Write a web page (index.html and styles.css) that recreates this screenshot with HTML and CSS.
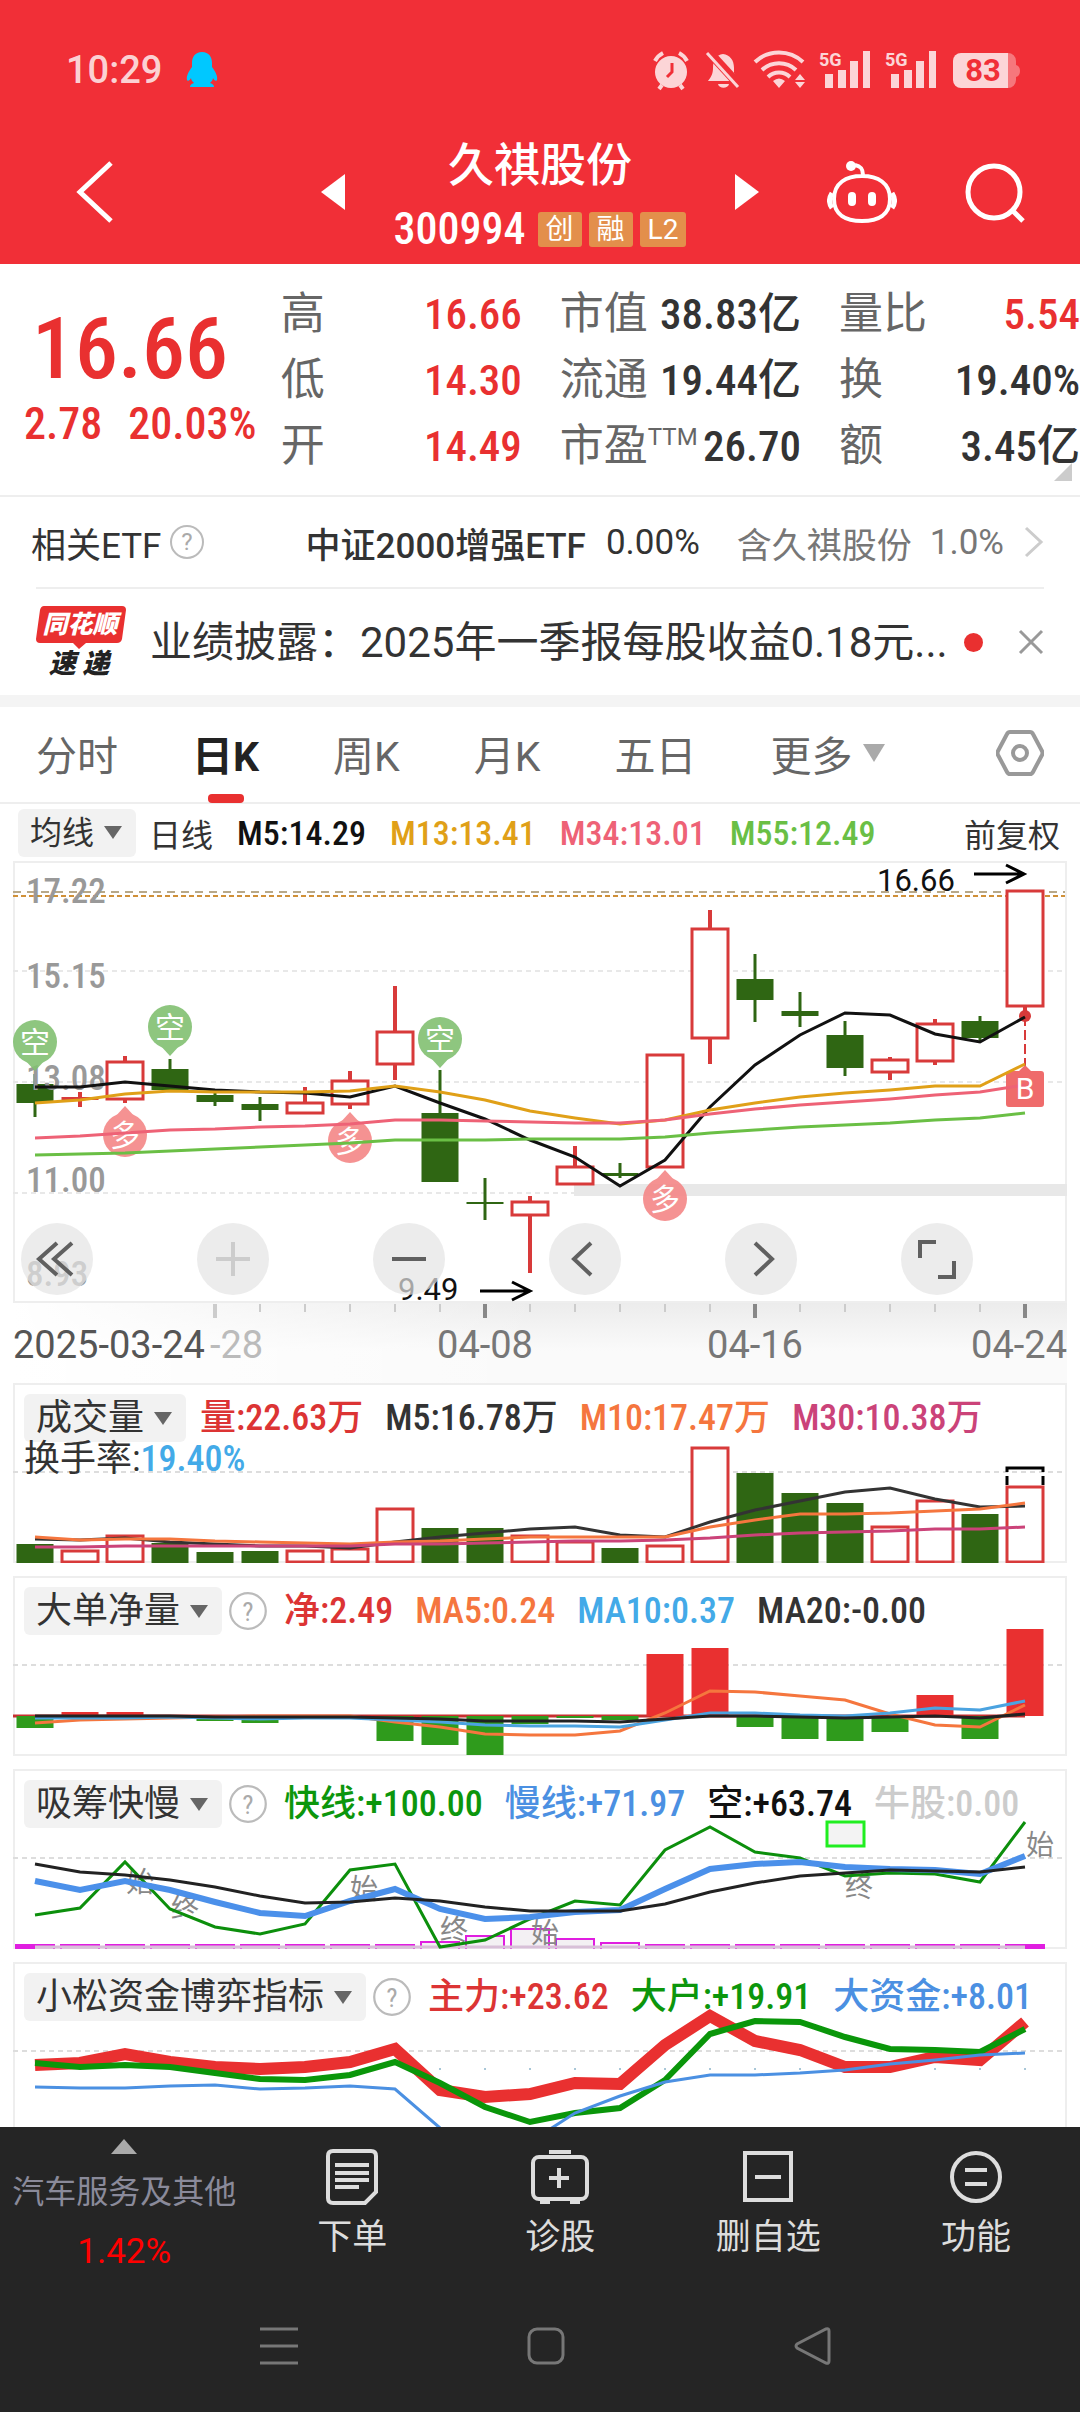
FILE: index.html
```
<!doctype html>
<html lang="zh-CN">
<head>
    <meta charset="utf-8"/>
    <meta name="viewport" content="width=device-width"/>
    <title>久祺股份 300994</title>
    <link rel="stylesheet" href="styles.css">
</head>
<body>
    <header class="top">
        <div class="status">
            <span class="clock">10:29</span>
            <svg class="qq" width="32" height="36" viewBox="0 0 32 36"><path d="M16 0C9 0 6 5 6 11v4C3 19 0 24 1 28c1 2 3 0 4-2 0 2 2 4 3 5-3 1-4 2-4 4h24c0-2-1-3-4-4 1-1 3-3 3-5 1 2 3 4 4 2 1-4-2-9-5-13v-4C26 5 23 0 16 0z" fill="#00c8ff"/></svg>
            <svg width="374" height="48" viewBox="0 -4 374 48" fill="#fff">
                <g opacity=".8">
                    <circle cx="19" cy="22" r="16"/>
                    <path d="M3 11a18 18 0 0 1 8-8M27 3a18 18 0 0 1 8 8M10 35l-3 4M28 35l3 4" fill="none" stroke="#fff" stroke-width="4"/>
                    <path d="M20 13v9l-5 5" fill="none" stroke="#f12f37" stroke-width="3"/>
                    <path d="M71 4c7 1 11 6 11 14v5l5 8H56c3-4 5-7 5-13 0-8 3-13 10-14zM66 34h11c-1 5-10 5-11 0z"/>
                    <path d="M56 1l32 35" stroke="#f12f37" stroke-width="9"/>
                    <path d="M55 3l31 34" stroke="#fff" stroke-width="3"/>
                    <path d="M103 12a35 35 0 0 1 48 0M110 20a25 25 0 0 1 34 0M116 27a16 16 0 0 1 22 0" fill="none" stroke="#fff" stroke-width="4"/>
                    <path d="M127 38l-6-7q6-5 12 0zM148 24l5 6h-10zM148 38l5-6h-10z"/>
                    <path d="M173 24h8v14h-8zM186 20h8v18h-8zM198 11h8v27h-8zM211 1h7v37h-7z"/>
                    <path d="M239 24h8v14h-8zM252 20h8v18h-8zM264 11h8v27h-8zM277 1h7v37h-7z"/>
                    <text class="net" x="167" y="16">5G</text>
                    <text class="net" x="233" y="16">5G</text>
                    <path d="M309 3h47v35h-47a8 8 0 0 1-8-8V11a8 8 0 0 1 8-8z"/>
                </g>
                <path d="M356 3a8 8 0 0 1 8 8v4q4 1 4 6t-4 6v3a8 8 0 0 1-8 8z" opacity=".35"/>
                <text class="pct" x="331" y="31">83</text>
            </svg>
        </div>
        <nav class="nav">
            <div class="nav-side">
                <button class="icon-btn" aria-label="返回"><svg width="38" height="64" viewBox="0 0 38 64"><path d="M35 3L4 32l31 29" fill="none" stroke="#fff" stroke-width="5"/></svg></button>
                <button class="icon-btn" aria-label="上一只"><svg width="24" height="36" viewBox="0 0 24 36"><path d="M24 0v36L0 18z" fill="#fff"/></svg></button>
            </div>
            <div class="nav-title">
                <h1>久祺股份</h1>
                <p><span class="code">300994</span><i class="tag">创</i><i class="tag">融</i><i class="tag">L2</i></p>
            </div>
            <div class="nav-side nav-right">
                <button class="icon-btn" aria-label="下一只"><svg width="24" height="36" viewBox="0 0 24 36"><path d="M0 0v36l24-18z" fill="#fff"/></svg></button>
                <button class="icon-btn" aria-label="助手">
                    <svg width="70" height="64" viewBox="0 0 70 64" fill="none" stroke="#fff" stroke-width="4">
                        <path d="M35 16c16 0 28 7 28 23s-12 22-28 22S7 55 7 39s12-23 28-23zM36 15c0-7-3-9-8-10"/>
                        <path d="M5 33q-5 8 0 15M65 33q5 8 0 15" stroke-width="5"/>
                        <path d="M25 36v6M45 36v6" stroke-width="8" stroke-linecap="round"/>
                        <circle cx="24" cy="6" r="5" fill="#fff" stroke="none"/>
                    </svg>
                </button>
                <button class="icon-btn" aria-label="搜索"><svg width="61" height="64" viewBox="0 0 61 64" fill="none" stroke="#fff" stroke-width="5"><circle cx="29" cy="32" r="26"/><path d="M47 50l11 11"/></svg></button>
            </div>
        </nav>
    </header>

    <section class="quote">
        <div class="price">
            <strong>16.66</strong>
            <p><span>2.78</span><span>20.03%</span></p>
        </div>
        <div class="stats">
            <dl>
                <div><dt>高</dt><dd class="up">16.66</dd></div>
                <div><dt>低</dt><dd class="up">14.30</dd></div>
                <div><dt>开</dt><dd class="up">14.49</dd></div>
            </dl>
            <dl>
                <div><dt>市值</dt><dd>38.83亿</dd></div>
                <div><dt>流通</dt><dd>19.44亿</dd></div>
                <div><dt>市盈<sup>TTM</sup></dt><dd>26.70</dd></div>
            </dl>
            <dl>
                <div><dt>量比</dt><dd class="up">5.54</dd></div>
                <div><dt>换</dt><dd>19.40%</dd></div>
                <div><dt>额</dt><dd>3.45亿</dd></div>
            </dl>
        </div>
    </section>

    <a class="etf" href="#etf">
        <span>相关ETF</span>
        <svg class="help" viewBox="0 0 36 36"><circle cx="18" cy="18" r="16"/><text x="18" y="26">?</text></svg>
        <b>中证2000增强ETF</b>
        <span>0.00%</span>
        <span class="muted hold">含久祺股份</span>
        <span class="muted">1.0%</span>
        <svg class="more" width="20" height="32" viewBox="0 0 20 32"><path d="M2 2l15 14L2 30" fill="none" stroke="#ccc" stroke-width="3"/></svg>
    </a>

    <div class="news">
        <svg width="90" height="74" viewBox="0 0 90 74">
            <path d="M8 1h78q4 0 4 4l-4 29q-1 4-5 4H50l-7 6-6-6H4q-4 0-4-4L4 5q1-4 4-4z" fill="#e93030"/>
            <text class="logo" x="44" y="28" fill="#fff">同花顺</text>
            <text class="logo logo-dark" x="43" y="68">速 递</text>
        </svg>
        <a href="#news">业绩披露：2025年一季报每股收益0.18元...</a>
        <i class="dot"></i>
        <button class="icon-btn" aria-label="关闭"><svg width="26" height="26" viewBox="0 0 26 26"><path d="M2 2l22 22M24 2L2 24" stroke="#999" stroke-width="3"/></svg></button>
    </div>

    <nav class="tabs">
        <button>分时</button>
        <button class="active">日K</button>
        <button>周K</button>
        <button>月K</button>
        <button>五日</button>
        <button class="caret">更多</button>
        <button class="settings" aria-label="设置"><svg width="48" height="46" viewBox="0 0 48 46" fill="none" stroke="#999"><path d="M14 2h20q2 0 3 2l9 17q1 2 0 4l-9 17q-1 2-3 2H14q-2 0-3-2L2 25q-1-2 0-4L11 4q1-2 3-2z" stroke-width="4"/><circle cx="24" cy="23" r="7" stroke-width="4"/></svg></button>
    </nav>

    <main class="charts">
        <div class="ma">
            <button class="pick">均线</button>
            <span class="day">日线</span>
            <b class="c-black">M5:14.29</b>
            <b class="c-gold">M13:13.41</b>
            <b class="c-pink">M34:13.01</b>
            <b class="c-lime">M55:12.49</b>
            <span class="adjust">前复权</span>
        </div>
        <div class="panel">
            <svg id="kline" viewBox="0 0 1054 442"></svg>
            <div class="controls">
                <button aria-label="最早"><svg viewBox="0 0 72 72"><path d="M36 20L18 36l18 16M51 20L33 36l18 16"/></svg></button>
                <button aria-label="放大" disabled><svg viewBox="0 0 72 72"><path d="M19 36h34M36 19v34"/></svg></button>
                <button aria-label="缩小"><svg viewBox="0 0 72 72"><path d="M19 36h34"/></svg></button>
                <button aria-label="左移"><svg viewBox="0 0 72 72"><path d="M42 20L25 36l17 16"/></svg></button>
                <button aria-label="右移"><svg viewBox="0 0 72 72"><path d="M30 20l17 16-17 16"/></svg></button>
                <button aria-label="全屏"><svg viewBox="0 0 72 72"><path d="M19 35V19h16M53 38v16H37"/></svg></button>
            </div>
        </div>
        <svg id="dates" class="dates" viewBox="0 0 1054 80"></svg>

        <div class="panel sub">
            <svg id="volume" viewBox="0 0 1054 180"></svg>
            <div class="legend">
                <button class="pick">成交量</button>
                <b class="c-red">量:22.63万</b>
                <b class="c-dark">M5:16.78万</b>
                <b class="c-orange">M10:17.47万</b>
                <b class="c-plum">M30:10.38万</b>
                <span class="turnover">换手率:<b class="c-sky">19.40%</b></span>
            </div>
        </div>
        <div class="panel sub">
            <svg id="netflow" viewBox="0 0 1054 180"></svg>
            <div class="legend">
                <button class="pick">大单净量</button>
                <svg class="help" viewBox="0 0 36 36"><circle cx="18" cy="18" r="16"/><text x="18" y="27">?</text></svg>
                <b class="c-red">净:2.49</b>
                <b class="c-orange">MA5:0.24</b>
                <b class="c-sky">MA10:0.37</b>
                <b class="c-dark">MA20:-0.00</b>
            </div>
        </div>
        <div class="panel sub">
            <svg id="speed" viewBox="0 0 1054 180"></svg>
            <div class="legend">
                <button class="pick">吸筹快慢</button>
                <svg class="help" viewBox="0 0 36 36"><circle cx="18" cy="18" r="16"/><text x="18" y="27">?</text></svg>
                <b class="c-green">快线:+100.00</b>
                <b class="c-blue">慢线:+71.97</b>
                <b class="c-black">空:+63.74</b>
                <b class="c-grey">牛股:0.00</b>
            </div>
        </div>
        <div class="panel sub cut">
            <svg id="funds" viewBox="0 0 1054 165"></svg>
            <div class="legend">
                <button class="pick">小松资金博弈指标</button>
                <svg class="help" viewBox="0 0 36 36"><circle cx="18" cy="18" r="16"/><text x="18" y="27">?</text></svg>
                <b class="c-red">主力:+23.62</b>
                <b class="c-green">大户:+19.91</b>
                <b class="c-blue">大资金:+8.01</b>
            </div>
        </div>
    </main>

    <footer class="bottom">
        <div class="tools">
            <a class="sector" href="#sector">
                <i class="arrow"></i>
                <span>汽车服务及其他</span>
                <em>1.42%</em>
            </a>
            <button><svg width="52" height="56" viewBox="0 0 52 56"><path d="M7 2h38q5 0 5 5v36L39 54H7q-5 0-5-5V7q0-5 5-5z"/><path d="M9 16h34M9 24h34M9 31h34M9 38h24"/></svg>下单</button>
            <button><svg width="60" height="56" viewBox="0 0 60 56"><rect x="3" y="8" width="54" height="42" rx="6"/><path d="M19 3h22M29 19v20M19 29h20M10 53h10M40 53h10"/></svg>诊股</button>
            <button><svg width="52" height="56" viewBox="0 0 52 56"><rect x="3" y="4" width="46" height="47"/><path d="M13 28h26"/></svg>删自选</button>
            <button><svg width="52" height="56" viewBox="0 0 52 56"><circle cx="26" cy="28" r="24"/><path d="M15 21h22M15 35h22"/></svg>功能</button>
        </div>
        <div class="system">
            <button class="icon-btn" aria-label="最近任务"><svg width="38" height="38" viewBox="0 0 38 38"><path d="M0 2h38M0 19h38M0 36h38"/></svg></button>
            <button class="icon-btn" aria-label="主屏幕"><svg width="38" height="38" viewBox="0 0 38 38"><rect x="2" y="2" width="34" height="34" rx="8"/></svg></button>
            <button class="icon-btn" aria-label="后退"><svg width="38" height="38" viewBox="0 0 38 38"><path d="M3 17L32 2q3-1 3 2v30q0 3-3 2L3 21q-2-2 0-4z"/></svg></button>
        </div>
    </footer>

    <script src="charts.js"></script>
</body>
</html>
```
FILE: styles.css
```
* {
    box-sizing: border-box;
}
body {
    margin: 0;
    background: #fff;
    color: #333;
    font-family: "Roboto", "Noto Sans CJK SC", sans-serif;
    font-size: 36px;
}
h1, p, dl, dd {
    margin: 0;
}
button {
    padding: 0;
    border: 0;
    background: none;
    color: inherit;
    font: inherit;
}
a {
    color: inherit;
    text-decoration: none;
}
i, em {
    font-style: normal;
}
svg {
    display: block;
    flex: none;
}

/* header */
.top {
    background: #f12f37;
    color: #fff;
}
.status {
    display: flex;
    align-items: center;
    height: 120px;
    padding: 20px 54px 0 66px;
}
.clock {
    margin-right: 24px;
    color: rgba(255, 255, 255, .8);
    font-size: 38px;
    font-weight: 500;
}
.qq {
    margin-right: auto;
}
.net {
    font-size: 18px;
    font-weight: 700;
}
.pct {
    fill: #f12f37;
    font-size: 31px;
    font-weight: 700;
    text-anchor: middle;
}
.nav {
    display: grid;
    grid-template-columns: 1fr 390px 1fr;
    align-items: center;
    height: 144px;
}
.nav-side {
    display: flex;
    align-items: center;
    justify-content: space-between;
    padding-left: 76px;
}
.nav-right {
    padding: 0 54px 0 0;
}
.nav-title {
    text-align: center;
}
.nav-title h1 {
    font-size: 46px;
    font-weight: 500;
    line-height: 56px;
}
.nav-title p {
    display: flex;
    align-items: center;
    justify-content: center;
    gap: 7px;
    margin-top: 18px;
    height: 36px;
}
.code {
    margin-right: 5px;
    font: 500 44px "Roboto Condensed", "Roboto", sans-serif;
}
.tag {
    min-width: 44px;
    padding: 0 8px;
    border-radius: 3px;
    background: #e38f4b;
    font-size: 28px;
    line-height: 35px;
}

/* quote */
.quote {
    position: relative;
    display: grid;
    grid-template-columns: 26% 1fr;
    padding: 17px 0 16px;
    border-bottom: 2px solid #eee;
}
.quote::after {
    content: "";
    position: absolute;
    right: 8px;
    bottom: 14px;
    border-left: 18px solid transparent;
    border-bottom: 18px solid #ccc;
}
.price {
    padding-top: 16px;
    color: #e93030;
    font-family: "Roboto Condensed", "Roboto", sans-serif;
    font-weight: 500;
}
.price strong {
    display: block;
    padding-left: 32px;
    font-size: 86px;
    font-weight: 500;
    line-height: 104px;
}
.price p {
    display: flex;
    gap: 26px;
    padding-left: 24px;
    font-size: 44px;
    line-height: 46px;
}
.stats {
    display: flex;
    gap: 38px;
}
.stats dl {
    flex: 1;
    min-width: 0;
}
.stats dl div {
    display: flex;
    align-items: center;
    justify-content: space-between;
    height: 66px;
}
.stats dt {
    display: flex;
    color: #666;
    font-size: 44px;
    line-height: 60px;
}
.stats sup {
    font-size: 24px;
    line-height: 42px;
}
.stats dd {
    font: 500 43px "Roboto Condensed", "Noto Sans CJK SC", sans-serif;
    line-height: 60px;
    white-space: nowrap;
}
.stats .up {
    color: #e93030;
}

/* related etf, news */
.etf {
    display: flex;
    align-items: center;
    height: 90px;
    padding: 0 36px 0 31px;
    font-size: 35px;
    white-space: nowrap;
}
.help {
    width: 40px;
    fill: none;
    stroke: #bbb;
    stroke-width: 2px;
}
.help text {
    fill: #aaa;
    stroke: none;
    font-size: 24px;
    text-anchor: middle;
}
.etf .help {
    width: 36px;
    margin: 0 auto 0 8px;
}
.etf b {
    margin-right: 20px;
    font-weight: 500;
}
.muted {
    color: #777;
}
.hold {
    margin: 0 18px 0 37px;
}
.more {
    margin-left: 20px;
}
.news {
    display: flex;
    align-items: center;
    height: 108px;
    margin: 0 36px;
    border-top: 2px solid #eee;
}
.logo {
    font-size: 25px;
    font-style: italic;
    font-weight: 900;
    text-anchor: middle;
}
.logo-dark {
    fill: #222;
    font-size: 27px;
}
.news a {
    flex: 1;
    overflow: hidden;
    padding: 0 0 8px 24px;
    font-size: 42px;
    white-space: nowrap;
}
.dot {
    width: 19px;
    height: 19px;
    margin-right: 35px;
    border-radius: 50%;
    background: #e93030;
}

/* period tabs */
.tabs {
    display: flex;
    align-items: center;
    gap: 74px;
    height: 109px;
    padding: 0 36px 4px;
    border-top: 12px solid #f4f4f4;
    border-bottom: 2px solid #eee;
    color: #666;
    font-size: 41px;
    white-space: nowrap;
}
.tabs .active {
    position: relative;
    color: #222;
    font-weight: 700;
}
.tabs .active::after {
    content: "";
    position: absolute;
    left: 50%;
    bottom: -20px;
    width: 36px;
    height: 9px;
    margin-left: -18px;
    border-radius: 4px;
    background: #e93030;
}
.caret {
    display: flex;
    align-items: center;
    gap: 10px;
}
.caret::after {
    content: "";
    border: 11px solid transparent;
    border-top: 18px solid #aaa;
    border-bottom: 0;
}
.settings {
    margin-left: auto;
}

/* charts */
.charts {
    padding: 0 13px;
}
.pick {
    display: flex;
    align-items: center;
    gap: 10px;
    height: 48px;
    padding: 0 14px 0 12px;
    border-radius: 6px;
    background: #f2f2f2;
    line-height: 48px;
}
.pick::after {
    content: "";
    border: 9px solid transparent;
    border-top: 13px solid #666;
    border-bottom: 0;
}
.ma {
    display: flex;
    align-items: center;
    height: 57px;
    padding: 0 7px 0 5px;
    font-size: 32px;
    white-space: nowrap;
}
.ma b {
    margin-right: 24px;
    font: 500 34px "Roboto Condensed", "Roboto", sans-serif;
}
.day {
    margin: 0 24px 0 13px;
}
.adjust {
    margin-left: auto;
}
.panel {
    position: relative;
    display: grid;
    box-shadow: inset 0 0 0 2px #eee;
}
.panel > * {
    grid-area: 1 / 1;
}
.panel > svg, .dates {
    width: 100%;
}
.sub {
    margin-bottom: 13px;
}
.cut {
    margin-bottom: 0;
    box-shadow: inset 2px 2px 0 #eee, inset -2px 0 0 #eee;
}
.controls {
    position: absolute;
    right: 94px;
    bottom: 8px;
    left: 8px;
    display: flex;
    justify-content: space-between;
}
.controls button {
    width: 72px;
    height: 72px;
    border-radius: 50%;
    background: rgba(228, 228, 228, .7);
}
.controls path {
    fill: none;
    stroke: #606060;
    stroke-width: 4px;
}
.controls :disabled path {
    stroke: #ccc;
}
.dates {
    background:
        linear-gradient(to right, #fff, rgba(255, 255, 255, 0) 50%),
        linear-gradient(#ececec, #fafafa 60%, #fafafa);
}
.dates text {
    fill: #777;
    font-size: 38px;
}
.legend {
    display: flex;
    flex-wrap: wrap;
    align-content: flex-start;
    align-items: center;
    column-gap: 22px;
    padding: 11px 11px 0;
    font-family: "Roboto Condensed", "Noto Sans CJK SC", sans-serif;
    line-height: 48px;
    white-space: nowrap;
}
.legend b {
    font-weight: 500;
}
.legend .pick {
    margin-right: -8px;
}
.legend .help {
    margin: 0 -6px 0 -8px;
}
.turnover {
    line-height: 34px;
}
.c-black { color: #111; }
.c-dark { color: #333; }
.c-gold { color: #e0a018; }
.c-pink { color: #ee6276; }
.c-lime { color: #6abf45; }
.c-red { color: #dc3434; }
.c-orange { color: #f5763e; }
.c-plum { color: #cb4379; }
.c-sky { color: #43aae8; }
.c-green { color: #0c960c; }
.c-blue { color: #4b90e2; }
.c-grey { color: #ccc; }

.panel svg text {
    stroke: none;
}
.price-label {
    fill: #999;
    font: 500 35px "Roboto Condensed", sans-serif;
}
.mark {
    fill: #111;
    font-size: 31px;
}
.badge {
    fill: #fff;
    font-size: 30px;
    text-anchor: middle;
}
.note {
    fill: #888;
    font-size: 28px;
}

/* bottom bar */
.bottom {
    background: #252525;
    color: #ddd;
}
.tools {
    display: flex;
    height: 153px;
}
.tools > * {
    flex: 1;
    display: flex;
    flex-direction: column;
    align-items: center;
}
.tools button {
    gap: 11px;
    padding-top: 22px;
    font-size: 35px;
    line-height: 44px;
}
.tools svg {
    fill: none;
    stroke: #ddd;
    stroke-width: 4px;
}
.tools .sector {
    flex: none;
    width: 23%;
    padding-top: 12px;
    color: #8a8a9a;
    font-size: 32px;
    line-height: 42px;
    white-space: nowrap;
}
.arrow {
    margin-bottom: 17px;
    border: 13px solid transparent;
    border-top: 0;
    border-bottom: 15px solid #aaa;
}
.sector em {
    margin-top: 18px;
    color: #f00;
    font-size: 35px;
}
.system {
    display: flex;
    align-items: center;
    justify-content: center;
    gap: 229px;
    height: 132px;
    padding-left: 12px;
}
.system svg {
    fill: none;
    stroke: #777;
    stroke-width: 3px;
}
```
FILE: charts.js
```
var NS = 'http://www.w3.org/2000/svg';
var STEP = 45, FIRST = 22, BAR = 37;
var RED = '#d83a3a', GREEN = '#2f6613';

function add(parent, name, attrs, text) {
    var el = document.createElementNS(NS, name);
    for (var key in attrs) el.setAttribute(key, attrs[key]);
    if (text) el.textContent = text;
    parent.appendChild(el);
    return el;
}

function xAt(i) { return FIRST + i * STEP; }

function line(svg, ys, color, width) {
    var pts = ys.map(function (y, i) { return xAt(i) + ',' + y; }).join(' ');
    add(svg, 'polyline', { points: pts, fill: 'none', stroke: color, 'stroke-width': width });
}

function grid(svg, y, color, dash) {
    add(svg, 'path', { d: 'M0 ' + y + 'H1052', stroke: color || '#ddd', 'stroke-width': 2, 'stroke-dasharray': dash || '5 4' });
}

// Hollow bars are rising days, solid bars are falling days
function bar(svg, i, top, bottom, up) {
    if (up && bottom - top > 4) {
        add(svg, 'rect', { x: xAt(i) - 18, y: top + 1, width: 36, height: bottom - top - 2, fill: '#fff', stroke: RED, 'stroke-width': 3 });
    } else {
        add(svg, 'rect', { x: xAt(i) - BAR / 2, y: top, width: BAR, height: bottom - top, fill: up ? RED : GREEN });
    }
}

function arrow(svg, x, y) {
    add(svg, 'path', { d: 'M' + x + ' ' + y + 'h50m-18 -9l18 9l-18 9', fill: 'none', stroke: '#000', 'stroke-width': 3 });
}

// Candlesticks: high, body top, body bottom, low, rising
var k = document.getElementById('kline');
[110, 221, 332].forEach(function (y) { grid(k, y, '#e8e8e8'); });
grid(k, 31, '#b8a888', '8 6');
grid(k, 35, '#d09038', '5 3');
add(k, 'rect', { x: 561, y: 323, width: 493, height: 12, fill: '#e8e8e8' });
[
    [213, 223, 242, 256, 0], [231, 236, 239, 246, 1], [195, 200, 239, 242, 1], [198, 208, 229, 229, 0],
    [228, 234, 241, 245, 0], [236, 243, 249, 260, 0], [226, 241, 253, 253, 1], [210, 219, 244, 248, 1],
    [125, 170, 204, 219, 1], [209, 252, 321, 321, 0], [317, 341, 343, 359, 0], [335, 340, 355, 412, 1],
    [285, 305, 324, 324, 1], [302, 312, 315, 317, 0], [193, 193, 307, 307, 1], [49, 67, 178, 203, 1],
    [93, 118, 139, 161, 0], [131, 150, 155, 166, 0], [160, 174, 207, 215, 0], [196, 198, 212, 219, 1],
    [158, 162, 201, 204, 1], [155, 160, 177, 180, 0], [29, 29, 146, 152, 1]
].forEach(function (c, i) {
    add(k, 'path', { d: 'M' + xAt(i) + ' ' + c[0] + 'V' + c[3], stroke: c[4] ? RED : GREEN, 'stroke-width': c[4] ? 4 : 3 });
    bar(k, i, c[1], c[2], c[4]);
});
[['17.22', 42], ['15.15', 127], ['13.08', 229], ['11.00', 331], ['8.93', 425]].forEach(function (l) {
    add(k, 'text', { x: 13, y: l[1], 'class': 'price-label' }, l[0]);
});
[[0, 181, 1], [3, 166, 1], [9, 178, 1], [2, 274, -1], [7, 280, -1], [14, 338, -1]].forEach(function (b) {
    var x = xAt(b[0]), s = b[2], y = b[1];
    var g = add(k, 'g', { opacity: .9 });
    add(g, 'circle', { cx: x, cy: y, r: 22, fill: s > 0 ? '#82c072' : '#f58787' });
    add(g, 'path', { d: 'M' + (x - 11) + ' ' + (y + 17 * s) + 'L' + x + ' ' + (y + 29 * s) + 'L' + (x + 11) + ' ' + (y + 17 * s), fill: s > 0 ? '#82c072' : '#f58787' });
    add(g, 'text', { x: x, y: y + 11, 'class': 'badge' }, s > 0 ? '空' : '多');
});
add(k, 'path', { d: 'M1012 155V206', stroke: RED, 'stroke-width': 2, 'stroke-dasharray': '10 4' });
add(k, 'circle', { cx: 1012, cy: 155, r: 6, fill: RED });
add(k, 'path', { d: 'M996 210h10l6-6l6 6h10q3 0 3 3v30q0 3-3 3h-32q-3 0-3-3v-30q0-3 3-3z', fill: '#ef6b6b' });
line(k, [226, 226, 221, 225, 229, 231, 232, 236, 225, 242, 258, 279, 296, 325, 299, 246, 204, 174, 152, 154, 173, 181, 156], '#111', 3);
line(k, [242, 239, 233, 230, 231, 231, 231, 230, 225, 231, 239, 250, 257, 263, 259, 249, 242, 236, 232, 229, 225, 225, 203], '#e0a018', 3);
line(k, [277, 275, 272, 269, 268, 266, 265, 263, 259, 259, 260, 261, 262, 262, 259, 253, 248, 244, 241, 238, 234, 231, 224], '#ee6276', 3);
line(k, [294, 293, 292, 290, 288, 286, 284, 282, 279, 279, 279, 278, 278, 278, 276, 272, 269, 266, 264, 262, 259, 257, 252], '#6abf45', 3);
add(k, 'text', { x: 1012, y: 238, 'class': 'badge' }, 'B');
add(k, 'text', { x: 864, y: 30, 'class': 'mark' }, '16.66');
arrow(k, 961, 13);
add(k, 'text', { x: 385, y: 439, 'class': 'mark' }, '9.49');
arrow(k, 467, 430);

// Date axis
var d = document.getElementById('dates');
for (var i = 4; i < 23; i++) {
    var major = i % 6 === 4;
    add(d, 'path', { d: 'M' + xAt(i) + ' 1v' + (major ? 14 : 8), stroke: major && i > 4 ? '#888' : '#ccc', 'stroke-width': major ? 4 : 2 });
}
add(d, 'text', { x: 0, y: 55, style: 'fill:#555' }, '2025-03-24');
add(d, 'text', { x: 197, y: 55, style: 'fill:#bbb' }, '-28');
add(d, 'text', { x: 472, y: 55, 'text-anchor': 'middle' }, '04-08');
add(d, 'text', { x: 742, y: 55, 'text-anchor': 'middle' }, '04-16');
add(d, 'text', { x: 1054, y: 55, 'text-anchor': 'end' }, '04-24');

// Volume
var v = document.getElementById('volume');
grid(v, 89);
[
    [161, 0], [167, 1], [152, 1], [160, 0], [169, 0], [168, 0], [167, 1], [165, 1], [125, 1], [145, 0], [145, 0], [152, 1],
    [158, 1], [165, 0], [162, 1], [64, 1], [90, 0], [110, 0], [120, 0], [143, 1], [117, 1], [131, 0], [103, 1]
].forEach(function (b, i) { bar(v, i, b[0], 180, b[1]); });
add(v, 'path', { d: 'M994 102v-9m0 -4v-4h36v4m0 4v9', fill: 'none', stroke: '#000', 'stroke-width': 3 });
line(v, [156, 157, 155, 159, 161, 163, 163, 165, 159, 154, 150, 146, 144, 152, 154, 139, 127, 118, 109, 105, 116, 124, 123], '#333', 3);
line(v, [154, 157, 156, 156, 158, 159, 160, 161, 159, 158, 156, 154, 154, 154, 154, 144, 137, 131, 131, 130, 128, 126, 120], '#f5763e', 3);
line(v, [164, 164, 163, 163, 163, 163, 163, 163, 161, 161, 160, 159, 158, 158, 157, 155, 152, 150, 149, 148, 146, 146, 144], '#cb4379', 3);

// Net large orders, bars grow from the zero line
var n = document.getElementById('netflow');
var ZERO = 140;
grid(n, 89);
add(n, 'path', { d: 'M0 140H1012', stroke: '#c83030', 'stroke-width': 3 });
[152, 136, 136, 140, 145, 147, 140, 140, 165, 169, 179, 148, 142, 144, 78, 72, 151, 163, 165, 156, 119, 163, 53].forEach(function (y, i) {
    add(n, 'rect', { x: xAt(i) - BAR / 2, y: Math.min(y, ZERO), width: BAR, height: Math.abs(y - ZERO), fill: y < ZERO ? '#e93030' : '#2f9b1c' });
});
line(n, [147, 144, 143, 142, 141, 140, 140, 140, 146, 151, 158, 159, 159, 155, 137, 115, 116, 120, 124, 138, 149, 151, 129], '#f5763e', 3);
line(n, [142, 142, 142, 141, 142, 143, 142, 142, 144, 146, 149, 150, 150, 151, 144, 137, 137, 139, 140, 137, 132, 134, 125], '#4ba3e0', 3);
line(n, [140, 140, 140, 140, 141, 141, 141, 141, 142, 143, 145, 145, 145, 146, 143, 140, 140, 141, 142, 141, 140, 142, 138], '#222', 3);

// Fast and slow lines
var s = document.getElementById('speed');
var raised = { 9: 173, 10: 167, 11: 160, 12: 170, 13: 174 };
grid(s, 89);
for (i = 0; i < 23; i++) {
    var y = raised[i] || 176;
    add(s, 'rect', { x: xAt(i) - 19, y: y, width: 38, height: 182 - y, fill: raised[i] ? '#f3f0f3' : '#e0c4e0', stroke: '#e01ee0', 'stroke-width': 2 });
}
add(s, 'path', { d: 'M22 178H1012', stroke: '#d8c0d8', 'stroke-width': 3 });
add(s, 'rect', { x: 2, y: 175, width: 20, height: 5, fill: '#e01ee0' });
add(s, 'rect', { x: 1012, y: 175, width: 20, height: 5, fill: '#e01ee0' });
[['始', 113, 123], ['终', 158, 149], ['始', 337, 130], ['终', 427, 171], ['始', 518, 174], ['终', 832, 128], ['始', 1013, 86]].forEach(function (t) {
    add(s, 'text', { x: t[1], y: t[2], 'class': 'note' }, t[0]);
});
add(s, 'rect', { x: 814, y: 53, width: 37, height: 24, fill: '#f3f3f3', stroke: '#20ee20', 'stroke-width': 3 });
line(s, [146, 139, 93, 140, 158, 165, 155, 101, 95, 178, 171, 150, 132, 136, 81, 58, 83, 89, 107, 104, 105, 113, 53], '#0c8f0c', 3);
line(s, [112, 121, 112, 121, 133, 144, 147, 132, 120, 140, 150, 148, 143, 141, 120, 100, 95, 93, 98, 100, 101, 105, 87], '#4b90ea', 6);
line(s, [95, 103, 106, 111, 118, 127, 134, 133, 129, 132, 138, 142, 142, 142, 135, 123, 114, 107, 104, 101, 102, 103, 98], '#222', 3);

// Funds
var f = document.getElementById('funds');
grid(f, 89);
for (i = 9; i < 23; i++) add(f, 'path', { d: 'M' + xAt(i) + ' 106v2', stroke: '#5590b0', 'stroke-width': 1 });
line(f, [103, 101, 92, 100, 105, 107, 105, 100, 87, 128, 135, 132, 121, 122, 83, 54, 79, 88, 105, 105, 95, 98, 60], '#e93030', 12);
line(f, [101, 105, 103, 105, 111, 117, 118, 113, 100, 121, 145, 160, 151, 146, 118, 72, 59, 60, 75, 87, 88, 90, 67], '#0a960a', 6);
line(f, [125, 126, 126, 124, 123, 127, 126, 124, 127, 166, 200, 180, 151, 134, 120, 113, 113, 111, 108, 102, 98, 93, 91], '#4b90e2', 3);
```
